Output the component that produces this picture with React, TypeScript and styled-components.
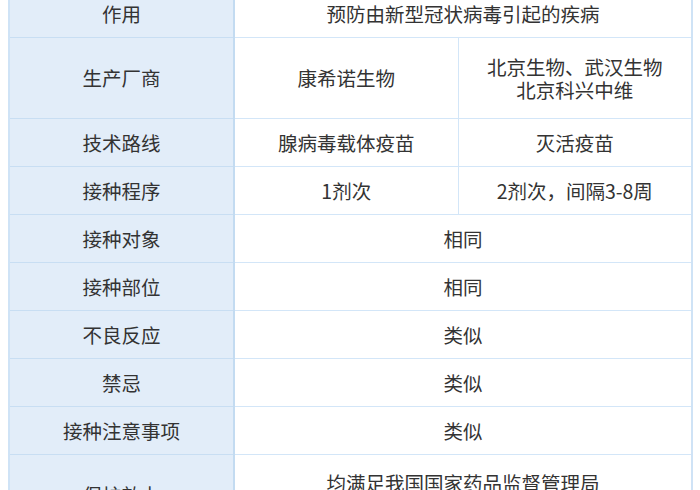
import React from "react";
import styled, { createGlobalStyle } from "styled-components";

const Global = createGlobalStyle`
  html, body { margin: 0; padding: 0; background: #ffffff; }
  body { font-family: "Noto Sans CJK SC", "Noto Sans", sans-serif; }
`;

const Page = styled.div`
  padding: 0 9px 0 8px;
  overflow: hidden;
  height: 490px;
`;

const Table = styled.table`
  width: 683px;
  margin-top: -12px;
  border-collapse: collapse;
  table-layout: fixed;
  border: 2px solid #cfe3f6;
  font-size: 19.5px;
  line-height: 23px;
  color: #333333;
`;

const Col = styled.col<{ $w: number }>`
  width: ${(p) => p.$w}px;
`;

const Row = styled.tr<{ $tall?: boolean }>`
  height: ${(p) => (p.$tall ? "81px" : "48px")};
`;

const Label = styled.th`
  background: #e2edf9;
  font-weight: 400;
  text-align: center;
  vertical-align: middle;
  padding: 0 8px;
  border: 1px solid #c8def3;
  border-right: 2px solid #c3dbf1;
`;

const Cell = styled.td`
  text-align: center;
  vertical-align: middle;
  padding: 0 8px;
  border: 1px solid #d3e6f8;
`;

const Line = styled.span`
  display: block;
`;

type R = { label: string; cells: string[][]; tall?: boolean };

const rows: R[] = [
  { label: "作用", cells: [["预防由新型冠状病毒引起的疾病"]] },
  { label: "生产厂商", cells: [["康希诺生物"], ["北京生物、武汉生物", "北京科兴中维"]], tall: true },
  { label: "技术路线", cells: [["腺病毒载体疫苗"], ["灭活疫苗"]] },
  { label: "接种程序", cells: [["1剂次"], ["2剂次，间隔3-8周"]] },
  { label: "接种对象", cells: [["相同"]] },
  { label: "接种部位", cells: [["相同"]] },
  { label: "不良反应", cells: [["类似"]] },
  { label: "禁忌", cells: [["类似"]] },
  { label: "接种注意事项", cells: [["类似"]] },
  { label: "保护效力", cells: [["均满足我国国家药品监督管理局", "相关技术指导原则要求"]], tall: true },
];

export default function App() {
  return (
    <>
      <Global />
      <Page>
        <Table>
          <colgroup>
            <Col $w={225} />
            <Col $w={224} />
            <Col $w={234} />
          </colgroup>
          <tbody>
            {rows.map((r) => (
              <Row key={r.label} $tall={r.tall}>
                <Label>{r.label}</Label>
                {r.cells.map((lines, i) => (
                  <Cell key={i} colSpan={r.cells.length === 1 ? 2 : 1}>
                    {lines.map((l, j) => (
                      <Line key={j}>{l}</Line>
                    ))}
                  </Cell>
                ))}
              </Row>
            ))}
          </tbody>
        </Table>
      </Page>
    </>
  );
}
